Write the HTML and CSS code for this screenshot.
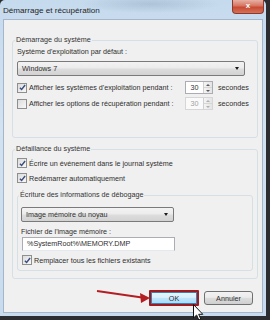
FILE: index.html
```html
<!DOCTYPE html>
<html lang="fr">
<head>
    <meta charset="UTF-8">
    <title>Démarrage et récupération</title>
    <link rel="stylesheet" href="styles.css">
</head>
<body>
<div class="window">
    <div class="titlebar">
        <span class="title">Démarrage et récupération</span>
        <span class="close">x</span>
    </div>
    <div class="client">
        <div class="group group-start">
            <span class="group-title">Démarrage du système</span>
            <div class="label">Système d'exploitation par défaut :</div>
            <div class="combo combo-os">Windows 7<span class="caret"></span></div>
            <div class="timer timer-first">
                <span class="check">
                    <span class="box"><svg viewBox="0 0 8 8"><path d="M1 4.2 L3 6.3 L7 1.2"/></svg></span>
                    Afficher les systèmes d'exploitation pendant :
                </span>
                <span class="spin">
                    <span class="spin-value">30</span>
                    <span class="spin-btns"><span class="up"></span><span class="down"></span></span>
                </span>
                <span class="unit">secondes</span>
            </div>
            <div class="timer">
                <span class="check">
                    <span class="box"></span>
                    Afficher les options de récupération pendant :
                </span>
                <span class="spin spin-off">
                    <span class="spin-value">30</span>
                    <span class="spin-btns"><span class="up"></span><span class="down"></span></span>
                </span>
                <span class="unit">secondes</span>
            </div>
        </div>

        <div class="group group-failure">
            <span class="group-title">Défaillance du système</span>
            <div class="check check-row">
                <span class="box"><svg viewBox="0 0 8 8"><path d="M1 4.2 L3 6.3 L7 1.2"/></svg></span>
                Écrire un événement dans le journal système
            </div>
            <div class="check check-row">
                <span class="box"><svg viewBox="0 0 8 8"><path d="M1 4.2 L3 6.3 L7 1.2"/></svg></span>
                Redémarrer automatiquement
            </div>

            <div class="group group-debug">
                <span class="group-title">Écriture des informations de débogage</span>
                <div class="combo combo-dump">Image mémoire du noyau<span class="caret"></span></div>
                <div class="label label-file">Fichier de l'image mémoire :</div>
                <div class="field">%SystemRoot%\MEMORY.DMP</div>
                <div class="check check-row check-replace">
                    <span class="box"><svg viewBox="0 0 8 8"><path d="M1 4.2 L3 6.3 L7 1.2"/></svg></span>
                    Remplacer tous les fichiers existants
                </div>
            </div>
        </div>

        <div class="buttons">
            <button class="btn btn-ok">OK</button>
            <button class="btn">Annuler</button>
        </div>
    </div>

    <!-- annotation arrow and mouse pointer drawn over the dialog -->
    <svg class="arrow" viewBox="0 0 56 16">
        <path d="M2 4 L47 10.5" stroke="#b41e23" stroke-width="1.8"/>
        <polygon points="55,11 45,6 46,16" fill="#b41e23"/>
    </svg>
    <svg class="pointer" viewBox="0 0 11 17">
        <path d="M0.5 0.5 L0.5 14 L3.6 11 L5.8 16 L7.8 15.1 L5.7 10.3 L9.8 10.3 Z" fill="#fff" stroke="#111" stroke-width="1"/>
    </svg>
</div>
</body>
</html>
```

FILE: styles.css
```css
html, body {
    margin: 0;
    padding: 0;
}

body {
    width: 270px;
    height: 320px;
    overflow: hidden;
    background: #2b2d30;
    font-family: "Liberation Sans", Arial, sans-serif;
    font-size: 7.2px;
    color: #2e2e2e;
}

/* Window frame (aero glass) */
.window {
    position: relative;
    width: 266px;
    height: 316px;
    box-sizing: border-box;
    padding: 0 3px 3px;
    display: flex;
    flex-direction: column;
    border-radius: 5px 5px 0 0;
    background:
        radial-gradient(ellipse 70px 9px at 150px 4px, rgba(120, 140, 165, 0.3), transparent),
        linear-gradient(to bottom, #c6daee, #d3e2f1 40%, #c8dbee);
}

.titlebar {
    height: 19px;
    display: flex;
    justify-content: space-between;
    align-items: flex-start;
}

.title {
    margin-top: 5px;
    font-size: 8.1px;
    line-height: 11px;
    color: #1f1f1f;
}

.close {
    width: 32px;
    height: 14px;
    margin-right: -1px;
    box-sizing: border-box;
    border: 1px solid #8a3a30;
    border-top: none;
    border-radius: 0 0 4px 4px;
    background: linear-gradient(to bottom, #e8b0a4, #d67560 45%, #c84a34 55%, #d47256);
    color: #fff;
    font-weight: bold;
    font-size: 8px;
    line-height: 12px;
    text-align: center;
}

.client {
    flex: 1;
    background: #f0f0f0;
    border: 1px solid #a3b6ca;
    padding: 0 4px 0 8px;
}

/* Group boxes */
.group {
    border: 1px solid #d5dfe5;
    border-radius: 3px;
}

.group-title {
    display: block;
    width: fit-content;
    height: 10px;
    line-height: 10px;
    margin: -6px 0 0 -2px;
    padding: 0 1px;
    background: #f0f0f0;
    color: #333;
}

.group-start {
    margin-top: 20px;
    padding: 0 12px 27px 4px;
}

.group-failure {
    margin-top: 11px;
    padding: 0 4px 7px 4px;
}

.group-debug {
    margin-top: 11px;
    padding: 0 4px 4px 3px;
}

.label {
    margin-top: 2px;
    line-height: 10px;
}

.label-file {
    margin-top: 5px;
}

/* Drop-down lists */
.combo {
    height: 15px;
    box-sizing: border-box;
    display: flex;
    align-items: center;
    justify-content: space-between;
    padding: 0 5px 0 4px;
    border: 1px solid #7a7a7a;
    border-radius: 2px;
    background: linear-gradient(to bottom, #f3f3f3, #ebebeb 48%, #dddddd 52%, #d2d2d2);
}

.combo-os {
    margin-top: 4px;
    width: 228px;
}

.combo-dump {
    margin-top: 7px;
    width: 153px;
}

.caret {
    width: 0;
    height: 0;
    border-left: 2.5px solid transparent;
    border-right: 2.5px solid transparent;
    border-top: 3px solid #1a1a1a;
}

/* Check boxes */
.check {
    display: flex;
    align-items: center;
    gap: 2px;
    white-space: nowrap;
}

.check-row {
    margin-top: 3px;
    height: 12px;
}

.check-replace {
    margin-left: 1px;
}

.box {
    width: 10px;
    height: 10px;
    box-sizing: border-box;
    border: 1px solid #8e8f8f;
    background: linear-gradient(135deg, #dcdcdc, #f8f8f8);
    display: flex;
    align-items: center;
    justify-content: center;
}

.box svg {
    width: 7px;
    height: 7px;
    fill: none;
    stroke: #3a4f7d;
    stroke-width: 1.6;
}

/* Timeout rows */
.timer {
    display: grid;
    grid-template-columns: 168px 28px auto;
    align-items: center;
    height: 13px;
    margin-top: 3px;
}

.timer-first {
    margin-top: 5px;
}

.spin {
    display: flex;
    height: 13px;
    box-sizing: border-box;
    border: 1px solid #abadb3;
    background: #fff;
}

.spin-value {
    flex: 1;
    text-align: center;
    line-height: 11px;
}

.spin-btns {
    width: 8px;
    display: flex;
    flex-direction: column;
    border-left: 1px solid #d0d0d0;
    background: linear-gradient(to right, #f4f4f4, #e4e4e4);
}

.spin-btns span {
    flex: 1;
    display: flex;
    align-items: center;
    justify-content: center;
}

.spin-btns .up {
    border-bottom: 1px solid #d6d6d6;
}

.spin-btns .up::after,
.spin-btns .down::after {
    content: "";
    border-left: 2px solid transparent;
    border-right: 2px solid transparent;
}

.spin-btns .up::after {
    border-bottom: 2px solid #5a5a5a;
}

.spin-btns .down::after {
    border-top: 2px solid #5a5a5a;
}

.spin-off {
    border-color: #d6d6d6;
    background: #fafafa;
    color: #a0a0a0;
}

.spin-off .up::after {
    border-bottom-color: #b0b0b0;
}

.spin-off .down::after {
    border-top-color: #b0b0b0;
}

.unit {
    margin-left: 5px;
}

/* Text field */
.field {
    width: 153px;
    height: 14px;
    box-sizing: border-box;
    margin-left: 1px;
    padding-left: 4px;
    line-height: 12px;
    border: 1px solid #abadb3;
    border-bottom-color: #e3e9ef;
    background: #fff;
}

/* Dialog buttons */
.buttons {
    display: flex;
    justify-content: flex-end;
    align-items: center;
    gap: 5px;
    margin: 11px 5px 0 0;
}

.btn {
    width: 49px;
    height: 14px;
    padding: 0;
    font-family: inherit;
    font-size: 7.2px;
    color: #2e2e2e;
    border: 1px solid #707070;
    border-radius: 3px;
    background: linear-gradient(to bottom, #f2f2f2, #ebebeb 45%, #dddddd 50%, #cfcfcf);
}

.btn-ok {
    width: 50px;
    height: 16px;
    border: 2px solid #a01b20;
    border-radius: 1px;
    box-shadow: inset 0 0 0 1px #3c7fb1;
    background: linear-gradient(to bottom, #eaf6fd, #d9f0fc 45%, #bee6fd 50%, #a7d9f5);
}

/* Overlays */
.arrow {
    position: absolute;
    left: 95px;
    top: 287px;
    width: 56px;
    height: 16px;
}

.pointer {
    position: absolute;
    left: 193px;
    top: 304px;
    width: 11px;
    height: 17px;
}
```
